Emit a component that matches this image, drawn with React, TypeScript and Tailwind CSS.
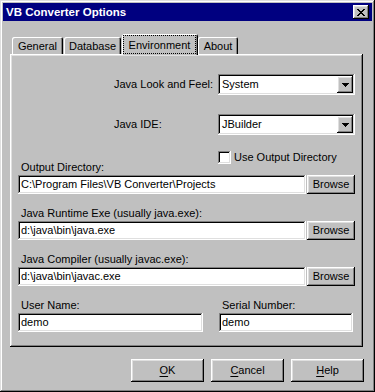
const raised =
  "shadow-[inset_-1px_-1px_#000000,inset_1px_1px_#ffffff,inset_-2px_-2px_#808080,inset_2px_2px_#dfdfdf]";
const sunken =
  "shadow-[inset_-1px_-1px_#ffffff,inset_1px_1px_#808080,inset_-2px_-2px_#dfdfdf,inset_2px_2px_#000000]";
const windowEdge =
  "shadow-[inset_-1px_-1px_#000000,inset_1px_1px_#dfdfdf,inset_-2px_-2px_#808080,inset_2px_2px_#ffffff]";

const tabs = [
  { label: "General", width: "w-[51px]", gap: "" },
  { label: "Database", width: "w-[57px]", gap: "ml-[1px]" },
  { label: "Environment", width: "w-[76px]", gap: "ml-[1px]", active: true },
  { label: "About", width: "w-[40px]", gap: "" },
];

function CloseGlyph() {
  return (
    <svg width="8" height="7" viewBox="0 0 8 7" shapeRendering="crispEdges">
      <path
        d="M0 0h2v1H0zM6 0h2v1H6zM1 1h2v1H1zM5 1h2v1H5zM2 2h4v1H2zM3 3h2v1H3zM2 4h4v1H2zM1 5h2v1H1zM5 5h2v1H5zM0 6h2v1H0zM6 6h2v1H6z"
        fill="#000"
      />
    </svg>
  );
}

function Arrow() {
  return (
    <svg width="7" height="4" viewBox="0 0 7 4" shapeRendering="crispEdges">
      <path d="M0 0h7v1H0zM1 1h5v1H1zM2 2h3v1H2zM3 3h1v1H3z" fill="#000" />
    </svg>
  );
}

function Combo({ value }: { value: string }) {
  return (
    <div className={`flex h-[21px] w-[137px] bg-white p-[2px] ${sunken}`}>
      <div className="flex flex-1 items-center pl-[2px]">{value}</div>
      <div className={`flex h-[17px] w-[16px] items-center justify-center bg-[#c0c0c0] ${raised}`}>
        <Arrow />
      </div>
    </div>
  );
}

function Field({ value, width }: { value: string; width: string }) {
  return (
    <div className={`flex h-[19px] items-center bg-white pl-[3px] whitespace-nowrap ${width} ${sunken}`}>
      {value}
    </div>
  );
}

function Label({ text, className = "" }: { text: string; className?: string }) {
  return <div className={`h-[13px] pl-[3px] leading-[13px] whitespace-nowrap ${className}`}>{text}</div>;
}

function Browse() {
  return (
    <div className={`ml-[1px] flex h-[19px] w-[48px] items-center justify-center bg-[#c0c0c0] ${raised}`}>
      Browse
    </div>
  );
}

function PushButton({ first, rest }: { first: string; rest: string }) {
  return (
    <div className={`flex h-[23px] w-[73px] items-center justify-center bg-[#c0c0c0] ${raised}`}>
      <span className="underline underline-offset-[2px]">{first}</span>
      {rest}
    </div>
  );
}

export default function App() {
  return (
    <div
      className={`h-[392px] w-[375px] bg-[#c0c0c0] p-[3px] text-[11px] leading-[13px] text-black ${windowEdge}`}
      style={{ fontFamily: '"Liberation Sans", Arial, sans-serif' }}
    >
      <div className="flex h-[18px] items-center justify-between bg-[#000080] pl-[3px] pr-[3px]">
        <span className="text-[11.5px] font-bold text-white">VB Converter Options</span>
        <div className={`flex h-[14px] w-[16px] items-center justify-center bg-[#c0c0c0] ${raised}`}>
          <CloseGlyph />
        </div>
      </div>

      <div className="pl-[7px] pt-[13px]">
        <div className="relative z-10 flex h-[20px] items-end pl-[2px]">
          {tabs.map((tab) =>
            tab.active ? (
              <div
                key={tab.label}
                className={`-mb-[1px] h-[21px] rounded-t-[2px] bg-[#c0c0c0] pt-[1px] pr-[2px] pb-[1px] pl-[1px] shadow-[inset_1px_1px_#ffffff,inset_-1px_0_#000000,inset_-2px_0_#808080] ${tab.gap} ${tab.width}`}
              >
                <div className="flex h-full items-center justify-center border border-dotted border-black pt-[1px]">
                  {tab.label}
                </div>
              </div>
            ) : (
              <div
                key={tab.label}
                className={`flex h-[17px] items-center justify-center rounded-t-[2px] pt-[2px] shadow-[inset_1px_1px_#ffffff,inset_-1px_0_#000000,inset_-2px_0_#808080] ${tab.gap} ${tab.width}`}
              >
                {tab.label}
              </div>
            ),
          )}
        </div>

        <div className={`h-[293px] w-[353px] bg-[#c0c0c0] ${raised}`}>
          <div className="flex items-center pl-[104px] pt-[20px]">
            <span className="w-[104px]">Java Look and Feel:</span>
            <Combo value="System" />
          </div>
          <div className="mt-[19px] flex items-center pl-[104px]">
            <span className="w-[104px]">Java IDE:</span>
            <Combo value="JBuilder" />
          </div>
          <div className="mt-[16px] flex h-[13px] items-center pl-[208px]">
            <div className={`h-[13px] w-[13px] bg-white ${sunken}`} />
            <span className="ml-[3px] whitespace-nowrap">Use Output Directory</span>
          </div>

          <div className="-mt-[3px] pl-[8px]">
            <Label text="Output Directory:" />
            <div className="mt-[1px] flex">
              <Field value="C:\Program Files\VB Converter\Projects" width="w-[288px]" />
              <Browse />
            </div>

            <Label text="Java Runtime Exe (usually java.exe):" className="mt-[13px]" />
            <div className="mt-[1px] flex">
              <Field value="d:\java\bin\java.exe" width="w-[288px]" />
              <Browse />
            </div>

            <Label text="Java Compiler (usually javac.exe):" className="mt-[13px]" />
            <div className="mt-[1px] flex">
              <Field value="d:\java\bin\javac.exe" width="w-[288px]" />
              <Browse />
            </div>

            <div className="mt-[13px] flex">
              <div className="w-[185px]">
                <Label text="User Name:" />
                <div className="mt-[1px]">
                  <Field value="demo" width="w-[185px]" />
                </div>
              </div>
              <div className="ml-[16px] w-[134px]">
                <Label text="Serial Number:" />
                <div className="mt-[1px]">
                  <Field value="demo" width="w-[134px]" />
                </div>
              </div>
            </div>
          </div>
        </div>
      </div>

      <div className="mt-[12px] mr-[8px] flex justify-end gap-[7px]">
        <PushButton first="O" rest="K" />
        <PushButton first="C" rest="ancel" />
        <PushButton first="H" rest="elp" />
      </div>
    </div>
  );
}
